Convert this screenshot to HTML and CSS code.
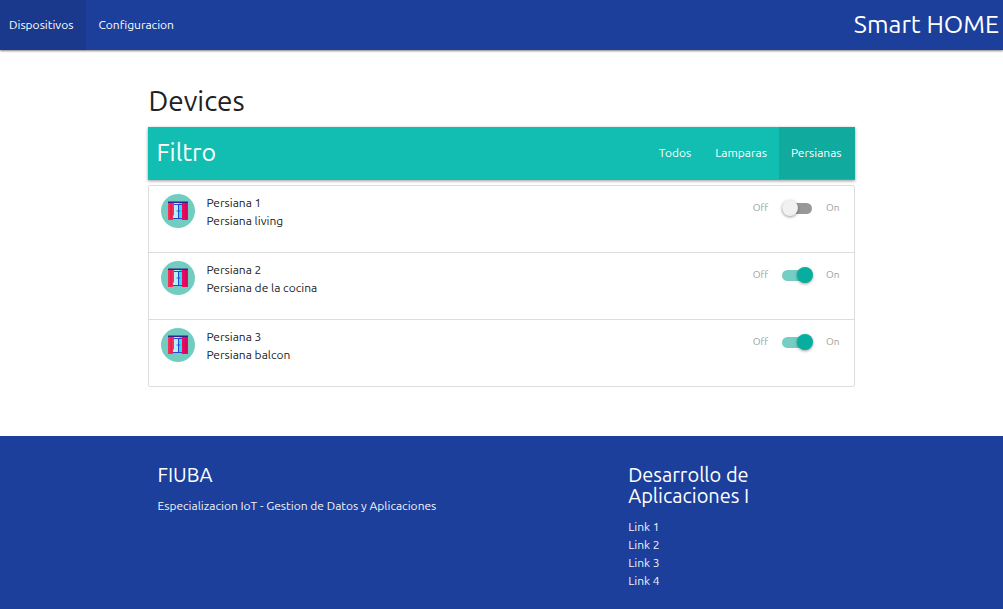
FILE: index.html
```
<!DOCTYPE html>
<html lang="es">
<head>
<meta charset="utf-8">
<meta name="viewport" content="width=device-width, initial-scale=1">
<title>Smart HOME</title>
<link rel="stylesheet" href="styles.css">
</head>
<body>
<svg class="sprite" aria-hidden="true">
  <symbol id="blind" viewBox="0 0 34 34">
    <circle cx="17" cy="17" r="17" fill="#72cdc1"/>
    <path d="M12 9h6v16h-6z" fill="#b5f1fa"/>
    <path d="M18 9h4v15h-4z" fill="#25e4fa"/>
    <path d="M12 10.500h10M17.500 10v14M12 24.500h10" fill="none" stroke="#2746d4"/>
    <path d="M15.500 17h4" stroke="#2746d4" stroke-width=".8"/>
    <path d="M7 8h6v13l-1 1v4H7z" fill="#f52f57"/>
    <path d="M21 8h6v18h-6z" fill="#e60a61"/>
    <path d="M10 9v16" stroke="#df174f"/>
    <path d="M25 9v16" stroke="#c80759"/>
    <path d="M7 7.500h20V9H7z" fill="#34208f"/>
  </symbol>
</svg>
<header>
  <nav class="topbar" aria-label="Principal">
    <div class="tabs">
      <a class="tab tab-current" href="#dispositivos" aria-current="page">Dispositivos</a>
      <a class="tab" href="#configuracion">Configuracion</a>
    </div>
    <a class="brand" href="#inicio">Smart HOME</a>
  </nav>
</header>
<main class="container">
  <h1 class="title">Devices</h1>
  <nav class="filter" aria-label="Filtro">
    <a class="filter-title" href="#filtro">Filtro</a>
    <div class="filter-links">
      <a class="filter-link" href="#todos">Todos</a>
      <a class="filter-link" href="#lamparas">Lamparas</a>
      <a class="filter-link filter-current" href="#persianas" aria-current="true">Persianas</a>
    </div>
  </nav>
  <ul class="devices">
    <li class="device">
      <svg class="avatar" aria-hidden="true"><use href="#blind"/></svg>
      <div class="info"><span>Persiana 1</span><p>Persiana living</p></div>
      <label class="switch"><span>Off</span><input class="toggle" type="checkbox" role="switch" aria-label="Persiana 1"><span>On</span></label>
    </li>
    <li class="device">
      <svg class="avatar" aria-hidden="true"><use href="#blind"/></svg>
      <div class="info"><span>Persiana 2</span><p>Persiana de la cocina</p></div>
      <label class="switch"><span>Off</span><input class="toggle" type="checkbox" role="switch" aria-label="Persiana 2" checked><span>On</span></label>
    </li>
    <li class="device">
      <svg class="avatar" aria-hidden="true"><use href="#blind"/></svg>
      <div class="info"><span>Persiana 3</span><p>Persiana balcon</p></div>
      <label class="switch"><span>Off</span><input class="toggle" type="checkbox" role="switch" aria-label="Persiana 3" checked><span>On</span></label>
    </li>
  </ul>
</main>
<footer class="footer">
  <div class="container footer-grid">
    <section class="footer-col">
      <h2 class="footer-title">FIUBA</h2>
      <p>Especializacion IoT - Gestion de Datos y Aplicaciones</p>
    </section>
    <section class="footer-col">
      <h2 class="footer-title">Desarrollo de Aplicaciones I</h2>
      <ul class="links">
        <li><a href="#link1">Link 1</a></li>
        <li><a href="#link2">Link 2</a></li>
        <li><a href="#link3">Link 3</a></li>
        <li><a href="#link4">Link 4</a></li>
      </ul>
    </section>
  </div>
</footer>
</body>
</html>
```
FILE: styles.css
```
* { box-sizing: border-box; }
html { min-height: 100%; background: #fff; }
body {
  margin: 0;
  min-height: 100vh;
  display: flex;
  flex-direction: column;
  font: 12px/18px Ubuntu, "Noto Sans", sans-serif;
  color: #212121;
}
a { color: inherit; text-decoration: none; }
h1, h2, p, ul { margin: 0; padding: 0; font-weight: 400; }
ul { list-style: none; }
.sprite { display: none; }

.topbar {
  display: flex;
  justify-content: space-between;
  height: 50px;
  line-height: 50px;
  background: #1c3f9c;
  color: #fff;
  box-shadow: 0 1px 2px rgba(0, 0, 0, .5);
}
.tabs, .filter-links { display: flex; }
.tab { padding: 0 12px; }
.tab-current { padding: 0 13px 0 9px; background: #1a398c; }
.brand { padding-right: 4px; font-size: 25px; line-height: 48px; }

.container { width: 70.4%; margin: 0 auto; }
.title { padding: 34px 0 10px; font-size: 28px; line-height: 33px; }
.filter {
  display: flex;
  justify-content: space-between;
  height: 53px;
  padding-bottom: 1px;
  line-height: 52px;
  background: #12beb2;
  color: #fff;
  box-shadow: 0 1px 3px rgba(0, 0, 0, .4);
}
.filter-title { padding-left: 8px; font-size: 25px; line-height: 50px; }
.filter-link { padding: 0 12px; }
.filter-current { padding: 0 13px 0 12px; background: #10aa9e; }

.devices {
  margin: 5px 0 49px;
  border: 1px solid #ddd;
  border-radius: 2px;
}
.device {
  box-sizing: content-box;
  display: flex;
  align-items: flex-start;
  gap: 11px;
  min-height: 50px;
  padding: 8px 14px 8px 12px;
}
.device + .device { border-top: 1px solid #ddd; }
.avatar { width: 34px; height: 34px; flex: none; }
.info { flex: 1; }
.switch {
  display: flex;
  align-items: center;
  gap: 14px;
  padding-top: 5px;
  font-size: 10px;
  color: #9e9e9e;
}
.toggle {
  appearance: none;
  width: 30px;
  height: 11px;
  margin: 0;
  display: flex;
  align-items: center;
  border-radius: 6px;
  background: #989898;
  cursor: pointer;
}
.toggle::before {
  content: "";
  width: 16px;
  height: 16px;
  flex: none;
  border-radius: 50%;
  background: #f1f1f1;
  box-shadow: 0 1px 3px rgba(0, 0, 0, .4);
}
.toggle:checked { background: #74cec3; }
.toggle:checked::before { margin-left: 15px; background: #05ae9f; }

.footer {
  flex: 1;
  padding: 28px 0 18px;
  background: #1c3f9c;
  color: #f4f4f4;
}
.footer-grid { display: grid; grid-template-columns: 2fr 1fr; }
.footer-col { padding: 0 9px; }
.footer-title { margin-bottom: 12px; font-size: 20px; line-height: 21px; color: #fff; }
```
